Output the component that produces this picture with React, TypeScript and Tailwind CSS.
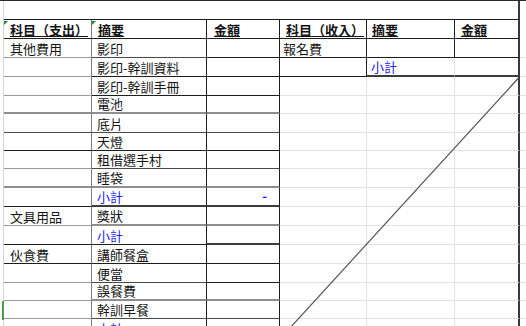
import React from "react";

const BK = "border-b border-b-[#1e1e1e]";
const DK = "border-b border-b-[#4a4a4a]";
const MID = "border-b border-b-[#9a9a9a]";
const G2 = "border-b-2 border-b-[#8e8e8e]";
const LT = "border-b border-b-[#e1e1e1]";
const DBL = "border-b-2 border-b-[#3c3c3c]";

const RA = "border-r border-r-[#7c7c7c]";
const RDK = "border-r border-r-[#1e1e1e]";
const RLT = "border-r border-r-[#e1e1e1]";
const RF = "border-r-2 border-r-[#3a3a3a]";

type C = { t?: string; b: string; r: string; w: string; p?: string; x?: string; blue?: boolean };

const font = { fontFamily: '"Noto Sans CJK TC", "Noto Sans", sans-serif' };

function Cell({ c }: { c: C }) {
  return (
    <div
      className={[
        "flex items-end shrink-0 whitespace-nowrap text-[13px] leading-[14px]",
        c.blue ? "text-[#2323f0]" : "text-[#141414]",
        c.w,
        c.b,
        c.r,
        c.p ?? "pl-[5px]",
        c.x ?? "",
      ].join(" ")}
    >
      {c.t ? <span className="pb-[1px]">{c.t}</span> : null}
    </div>
  );
}

const WA = "w-[88px]";
const WB = "w-[115px]";
const WC = "w-[73px]";
const WD = "w-[87px]";
const WE = "w-[88px]";
const WF = "w-[65px]";

function DataRow({
  h,
  a,
  ab,
  b,
  bb,
  cb,
  blue,
  dash,
  right,
}: {
  h: string;
  a?: string;
  ab: string;
  b?: string;
  bb: string;
  cb: string;
  blue?: boolean;
  dash?: boolean;
  right?: React.ReactNode;
}) {
  return (
    <div className={"flex " + h}>
      <Cell c={{ t: a, w: WA, b: ab, r: RA, p: "pl-[6px]" }} />
      <Cell c={{ t: b, w: WB, b: bb, r: RDK, blue }} />
      <div
        className={[
          "flex items-end justify-end shrink-0 pr-[12px] text-[13px] leading-[14px]",
          WC,
          cb,
          RDK,
        ].join(" ")}
      >
        {dash ? <span className="text-[#1a1aff] font-bold pb-[2px]">-</span> : null}
      </div>
      {right ?? (
        <>
          <Cell c={{ w: WD, b: LT, r: RLT }} />
          <Cell c={{ w: WE, b: LT, r: RLT }} />
          <Cell c={{ w: WF, b: LT, r: RF }} />
        </>
      )}
      <div className={"flex-1 " + LT} />
    </div>
  );
}

const UL = "underline underline-offset-[1px] decoration-1";

export default function App() {
  return (
    <div
      className="relative w-[526px] h-[326px] overflow-hidden bg-white border-t border-t-[#2a2a2a]"
      style={font}
    >
      <div className="flex flex-col pl-[3px]">
        <div className="flex flex-col border-l border-l-[#d6d6d6]">
          {/* title row */}
          <div className="flex h-[19px]">
            <div className={"w-[516px] shrink-0 " + BK + " " + RF} />
            <div className="flex-1" />
          </div>
          {/* header row */}
          <div className="flex h-[19px] font-bold">
            <Cell c={{ t: "科目（支出）", w: WA, b: BK, r: RA, p: "pl-[6px]", x: UL }} />
            <Cell c={{ t: "摘要", w: WB, b: BK, r: RDK, p: "pl-[6px]", x: UL }} />
            <Cell c={{ t: "金額", w: WC, b: BK, r: RDK, p: "pl-[7px]", x: UL }} />
            <Cell c={{ t: "科目（收入）", w: WD, b: BK, r: RDK, p: "pl-[6px]", x: UL }} />
            <Cell c={{ t: "摘要", w: WE, b: BK, r: RDK, p: "pl-[5px]", x: UL }} />
            <Cell c={{ t: "金額", w: WF, b: BK, r: RF, p: "pl-[6px]", x: UL }} />
            <div className="flex-1" />
          </div>
          <DataRow
            h="h-[19px]"
            a="其他費用"
            ab={MID}
            b="影印"
            bb={DK}
            cb={BK}
            right={
              <>
                <Cell c={{ t: "報名費", w: WD, b: BK, r: RDK, p: "pl-[3px]" }} />
                <Cell c={{ w: WE, b: BK, r: RDK }} />
                <Cell c={{ w: WF, b: BK, r: RF }} />
              </>
            }
          />
          <DataRow
            h="h-[19px]"
            ab={MID}
            b="影印-幹訓資料"
            bb={BK}
            cb={BK}
            right={
              <>
                <Cell c={{ w: WD, b: BK, r: RDK }} />
                <Cell c={{ t: "小計", w: WE, b: DBL, r: RLT, p: "pl-[4px]", blue: true }} />
                <Cell c={{ w: WF, b: DBL, r: RF }} />
              </>
            }
          />
          <DataRow h="h-[19px]" ab={MID} b="影印-幹訓手冊" bb={BK} cb={BK} />
          <DataRow h="h-[18px]" ab={G2} b="電池" bb={G2} cb={G2} />
          <DataRow h="h-[19px]" ab={DK} b="底片" bb={DK} cb={DK} />
          <DataRow h="h-[18px]" ab={BK} b="天燈" bb={BK} cb={BK} />
          <DataRow h="h-[18px]" ab={MID} b="租借選手村" bb={DK} cb={DK} />
          <DataRow h="h-[19px]" ab={G2} b="睡袋" bb={G2} cb={G2} />
          <DataRow h="h-[19px]" ab={BK} b="小計" blue dash bb={DBL} cb={DBL} />
          <DataRow h="h-[19px]" a="文具用品" ab={MID} b="獎狀" bb={G2} cb={G2} />
          <DataRow h="h-[19px]" ab={BK} b="小計" blue bb={BK} cb={DBL} />
          <DataRow h="h-[19px]" a="伙食費" ab={BK} b="講師餐盒" bb={BK} cb={BK} />
          <DataRow h="h-[19px]" ab={MID} b="便當" bb={DK} cb={BK} />
          <DataRow h="h-[18px]" ab={MID} b="誤餐費" bb={G2} cb={G2} />
          <DataRow h="h-[18px]" ab={MID} b="幹訓早餐" bb={DK} cb={DK} />
          <DataRow h="h-[19px]" ab={MID} b="小計" blue bb={DK} cb={DK} />
        </div>
      </div>

      {/* Excel green indicators */}
      <div className="absolute left-[4px] top-[20px] w-0 h-0 border-t-[4px] border-t-[#1e8c2e] border-r-[4px] border-r-transparent" />
      <div className="absolute left-[92px] top-[20px] w-0 h-0 border-t-[4px] border-t-[#1e8c2e] border-r-[4px] border-r-transparent" />
      <div className="absolute left-[2px] top-[300px] w-[2px] h-[19px] bg-[#4aa04a]" />

      {/* diagonal line across merged cell */}
      <svg className="absolute inset-0 pointer-events-none" width="526" height="326">
        <line x1="518.5" y1="77" x2="279" y2="339" stroke="#555" strokeWidth="1.2" />
      </svg>
    </div>
  );
}
